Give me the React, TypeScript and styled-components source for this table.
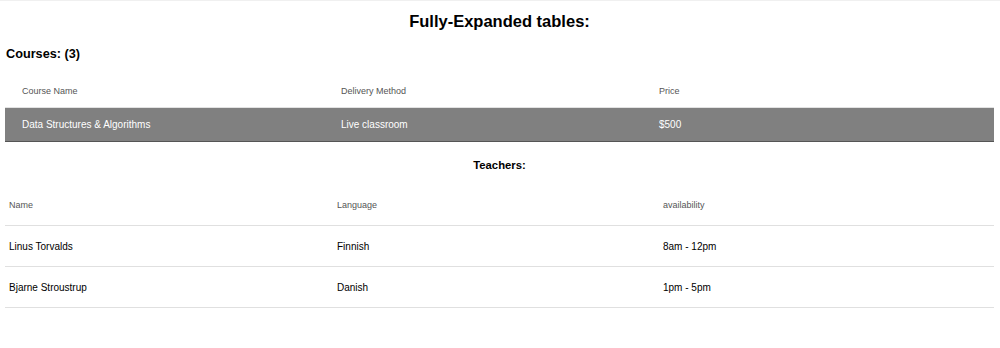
import React from 'react';
import styled, { createGlobalStyle } from 'styled-components';

const GlobalStyle = createGlobalStyle`
  html, body {
    margin: 0;
    padding: 0;
    background: #ffffff;
  }
  body {
    font-family: "Liberation Sans", Arial, sans-serif;
    color: #000;
  }
`;

const courses = [
  { name: 'Data Structures & Algorithms', delivery: 'Live classroom', price: '$500' },
];

const teachers = [
  { name: 'Linus Torvalds', language: 'Finnish', availability: '8am - 12pm' },
  { name: 'Bjarne Stroustrup', language: 'Danish', availability: '1pm - 5pm' },
];

const App: React.FC = () => (
  <>
    <GlobalStyle />
    <Page>
      <Title>Fully-Expanded tables:</Title>
      <SectionTitle>Courses: ({3})</SectionTitle>
      <CourseTable>
        <CourseHead>
          <HeadCell $pad={17}>Course Name</HeadCell>
          <HeadCell $pad={17}>Delivery Method</HeadCell>
          <HeadCell $pad={17}>Price</HeadCell>
        </CourseHead>
        {courses.map((c) => (
          <CourseRow key={c.name}>
            <BodyCell $pad={17}>{c.name}</BodyCell>
            <BodyCell $pad={17}>{c.delivery}</BodyCell>
            <BodyCell $pad={17}>{c.price}</BodyCell>
          </CourseRow>
        ))}
      </CourseTable>
      <SubTitle>Teachers:</SubTitle>
      <TeacherTable>
        <TeacherHead>
          <HeadCell $pad={4}>Name</HeadCell>
          <HeadCell $pad={4}>Language</HeadCell>
          <HeadCell $pad={4}>availability</HeadCell>
        </TeacherHead>
        {teachers.map((t) => (
          <TeacherRow key={t.name}>
            <BodyCell $pad={4}>{t.name}</BodyCell>
            <BodyCell $pad={4}>{t.language}</BodyCell>
            <BodyCell $pad={4}>{t.availability}</BodyCell>
          </TeacherRow>
        ))}
      </TeacherTable>
    </Page>
  </>
);

export default App;

const Page = styled.div`
  border-top: 1px solid #f0f0f0;
  padding: 0 6px 0 5px;
`;

const Title = styled.h1`
  margin: 0;
  padding-top: 9px;
  height: 32px;
  text-align: center;
  font-size: 16.5px;
  line-height: 22px;
  font-weight: 700;
`;

const SectionTitle = styled.h2`
  margin: 0;
  padding: 2px 0 0 1px;
  height: 31px;
  font-size: 12.7px;
  line-height: 20px;
  font-weight: 700;
`;

const SubTitle = styled.h3`
  margin: 0;
  padding-top: 15px;
  height: 28px;
  text-align: center;
  font-size: 11.3px;
  line-height: 16px;
  font-weight: 700;
`;

const CourseTable = styled.div`
  display: grid;
  grid-template-columns: 319px 318px 1fr;
`;

const CourseHead = styled.div`
  display: contents;
  & > * {
    height: 32px;
    border-bottom: 1px solid #e2e2e2;
  }
`;

const CourseRow = styled.div`
  display: contents;
  & > * {
    height: 33px;
    background: #808080;
    color: #ffffff;
    border-bottom: 1px solid #555555;
  }
`;

const TeacherTable = styled.div`
  display: grid;
  grid-template-columns: 328px 326px 1fr;
`;

const TeacherHead = styled.div`
  display: contents;
  & > * {
    height: 40px;
    border-bottom: 1px solid #e0e0e0;
  }
`;

const TeacherRow = styled.div`
  display: contents;
  & > * {
    height: 40px;
    border-bottom: 1px solid #e0e0e0;
  }
`;

const HeadCell = styled.div<{ $pad: number }>`
  display: flex;
  align-items: center;
  padding-left: ${(p) => p.$pad}px;
  font-size: 9px;
  color: #555555;
`;

const BodyCell = styled.div<{ $pad: number }>`
  display: flex;
  align-items: center;
  padding-left: ${(p) => p.$pad}px;
  font-size: 10px;
`;
